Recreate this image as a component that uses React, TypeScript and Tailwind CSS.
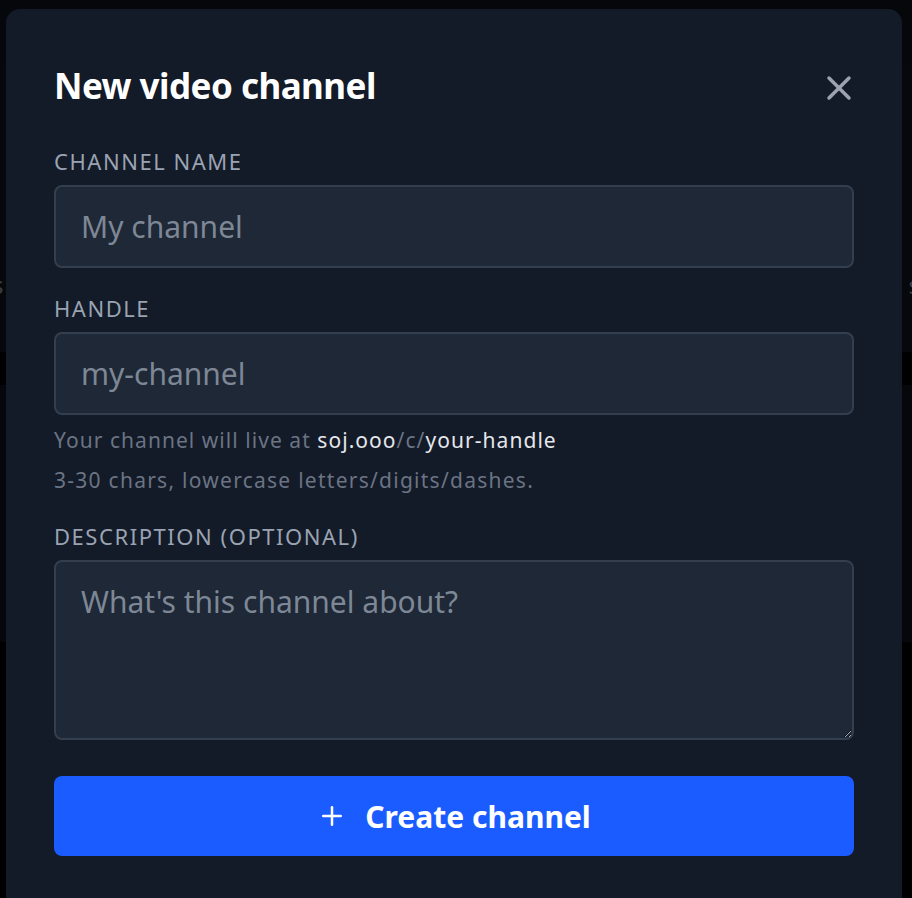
import { X, Plus } from 'lucide-react'

const font = { fontFamily: '"Noto Sans", "Open Sans", sans-serif' }

function Label({ children }: { children: React.ReactNode }) {
  return (
    <label className="block text-[22px] leading-[26px] tracking-[0.07em] uppercase text-[#9aa3b2] mb-[11px]">
      {children}
    </label>
  )
}

const field =
  'w-full rounded-[8px] bg-[#1e2836] border-2 border-[#333e4e] px-[25px] text-[30px] text-white placeholder:text-[#7d8795] outline-none'

export default function App() {
  return (
    <div className="relative h-[898px] w-[912px] overflow-hidden bg-[#05070b]" style={font}>
      {/* page behind the overlay */}
      <div className="flex flex-col">
        <div className="h-[65px] bg-[#05070b]" />
        <div className="h-[287px] bg-[#06080c] flex items-start justify-between pt-[204px]">
          <span className="text-[24px] leading-[32px] text-[#3a3f47] -ml-[8px]">s</span>
          <span className="text-[24px] leading-[32px] text-[#3a3f47] -mr-[8px]">s</span>
        </div>
        <div className="h-[33px] bg-black" />
        <div className="h-[257px] bg-[#05070b]" />
        <div className="h-[256px] bg-black" />
      </div>

      {/* modal */}
      <div className="absolute left-[6px] top-[9px] w-[896px] h-[920px] rounded-[14px] bg-[#131a28] px-[48px] pt-[53px]">
        <div className="flex items-center justify-between h-[48px]">
          <h2 className="text-[35px] font-bold text-white tracking-[-0.015em]">New video channel</h2>
          <button className="text-[#9ca3af] mr-[-5px] mt-[4px]">
            <X size={40} strokeWidth={2.1} />
          </button>
        </div>

        <div className="mt-[38px]">
          <Label>Channel name</Label>
          <input placeholder="My channel" className={`${field} h-[83px]`} />
        </div>

        <div className="mt-[27px]">
          <Label>Handle</Label>
          <input placeholder="my-channel" className={`${field} h-[83px]`} />
          <p className="mt-[11px] text-[21px] leading-[28px] tracking-[0.05em] text-[#6b7483]">
            Your channel will live at <span className="text-[#e5e7eb]">soj.ooo</span>/c/
            <span className="text-[#e5e7eb]">your-handle</span>
          </p>
          <p className="mt-[12px] text-[21px] leading-[28px] tracking-[0.06em] text-[#6b7483]">
            3-30 chars, lowercase letters/digits/dashes.
          </p>
        </div>

        <div className="mt-[29px]">
          <Label>Description (optional)</Label>
          <textarea
            placeholder="What's this channel about?"
            className={`${field} block h-[180px] py-[20px] leading-[40px]`}
          />
        </div>

        <button className="mt-[36px] w-full h-[80px] rounded-[8px] bg-[#1a5cff] flex items-center justify-center gap-[18px] text-white">
          <Plus size={30} strokeWidth={2} />
          <span className="text-[30px] font-bold">Create channel</span>
        </button>
      </div>
    </div>
  )
}
